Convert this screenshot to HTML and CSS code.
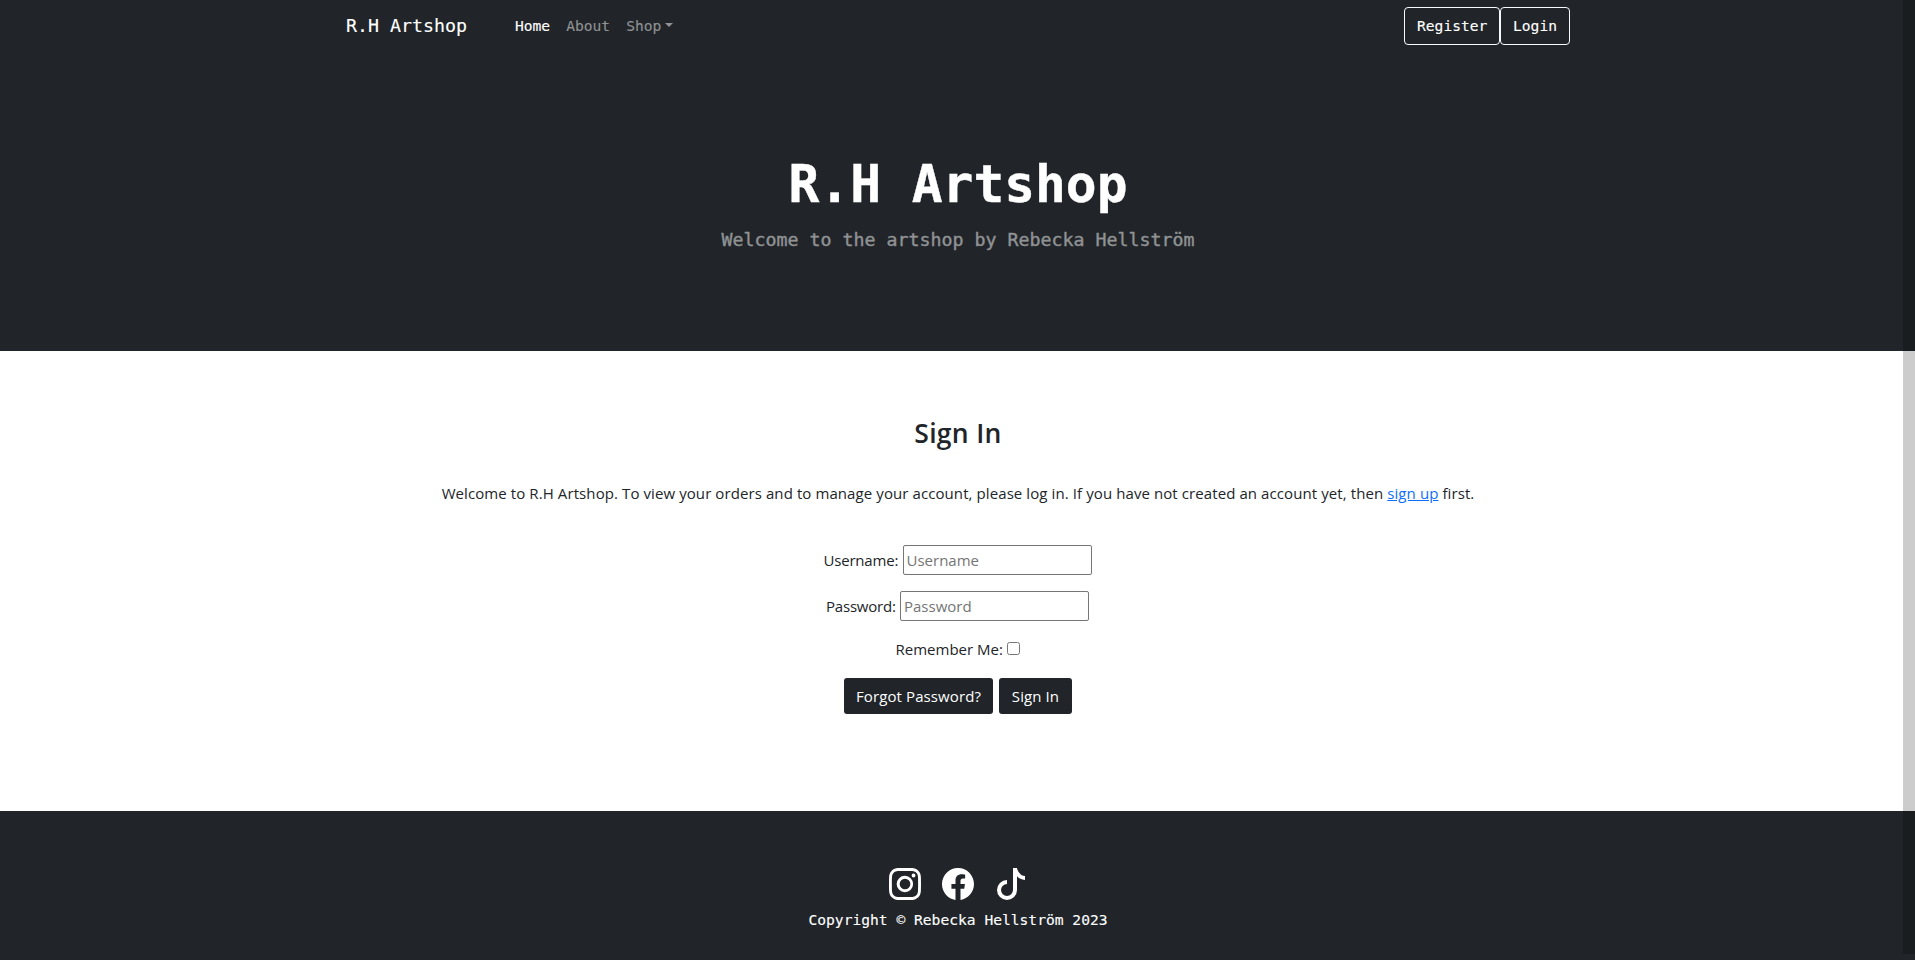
FILE: index.html
```html
<!DOCTYPE html>
<html lang="en">
<head>
<meta charset="utf-8">
<title>R.H Artshop</title>
<link rel="stylesheet" href="styles.css">
</head>
<body>
<nav class="navbar">
  <a class="brand">R.H Artshop</a>
  <div class="nav-links">
    <a class="nav-link active">Home</a>
    <a class="nav-link">About</a>
    <a class="nav-link dropdown">Shop</a>
  </div>
  <div class="nav-actions">
    <a class="btn-outline">Register</a>
    <a class="btn-outline">Login</a>
  </div>
</nav>
<header class="hero">
  <h1>R.H Artshop</h1>
  <p>Welcome to the artshop by Rebecka Hellström</p>
</header>
<main class="signin">
  <h2>Sign In</h2>
  <p class="intro">Welcome to R.H Artshop. To view your orders and to manage your account, please log in. If you have not created an account yet, then <a class="link">sign up</a> first.</p>
  <form class="form">
    <div class="field"><label class="label-user" for="user">Username:</label><input class="text-input" id="user" type="text" placeholder="Username"></div>
    <div class="field"><label class="label-pass" for="pass">Password:</label><input class="text-input" id="pass" type="password" placeholder="Password"></div>
    <div class="remember"><label class="label-remember" for="rem">Remember Me:</label><input class="check" id="rem" type="checkbox"></div>
    <div class="buttons"><a class="btn btn-forgot">Forgot Password?</a><button class="btn btn-signin" type="button">Sign In</button></div>
  </form>
</main>
<footer class="footer">
  <div class="social">
    <svg viewBox="0 0 16 16"><path d="M8 0C5.829 0 5.556.01 4.703.048 3.85.088 3.269.222 2.76.42a3.917 3.917 0 0 0-1.417.923A3.927 3.927 0 0 0 .42 2.76C.222 3.268.087 3.85.048 4.7.01 5.555 0 5.827 0 8.001c0 2.172.01 2.444.048 3.297.04.852.174 1.433.372 1.942.205.526.478.972.923 1.417.444.445.89.719 1.416.923.51.198 1.09.333 1.942.372C5.555 15.99 5.827 16 8 16s2.444-.01 3.298-.048c.851-.04 1.434-.174 1.943-.372a3.916 3.916 0 0 0 1.416-.923c.445-.445.718-.891.923-1.417.197-.509.332-1.09.372-1.942C15.99 10.445 16 10.173 16 8s-.01-2.445-.048-3.299c-.04-.851-.175-1.433-.372-1.941a3.926 3.926 0 0 0-.923-1.417A3.911 3.911 0 0 0 13.24.42c-.51-.198-1.092-.333-1.943-.372C10.443.01 10.172 0 7.998 0h.003zm-.717 1.442h.718c2.136 0 2.389.007 3.232.046.78.035 1.204.166 1.486.275.373.145.64.319.92.599.28.28.453.546.598.92.11.281.24.705.275 1.485.039.843.047 1.096.047 3.231s-.008 2.389-.047 3.232c-.035.78-.166 1.203-.275 1.485a2.47 2.47 0 0 1-.599.919c-.28.28-.546.453-.92.598-.28.11-.704.24-1.485.276-.843.038-1.096.047-3.232.047s-2.39-.009-3.233-.047c-.78-.036-1.203-.166-1.485-.276a2.478 2.478 0 0 1-.92-.598 2.48 2.48 0 0 1-.6-.92c-.109-.281-.24-.705-.275-1.485-.038-.843-.046-1.096-.046-3.233 0-2.136.008-2.388.046-3.231.036-.78.166-1.204.276-1.486.145-.373.319-.64.599-.92.28-.28.546-.453.92-.598.282-.11.705-.24 1.485-.276.738-.034 1.024-.044 2.515-.045v.002zm4.988 1.328a.96.96 0 1 0 0 1.92.96.96 0 0 0 0-1.92zm-4.27 1.122a4.109 4.109 0 1 0 0 8.217 4.109 4.109 0 0 0 0-8.217zm0 1.441a2.667 2.667 0 1 1 0 5.334 2.667 2.667 0 0 1 0-5.334z"/></svg>
    <svg viewBox="0 0 16 16"><path d="M16 8.049c0-4.446-3.582-8.05-8-8.05C3.58 0-.002 3.603-.002 8.05c0 4.017 2.926 7.347 6.75 7.951v-5.625h-2.03V8.05H6.75V6.275c0-2.017 1.195-3.131 3.022-3.131.876 0 1.791.157 1.791.157v1.98h-1.009c-.993 0-1.303.621-1.303 1.258v1.51h2.218l-.354 2.326H9.25V16c3.824-.604 6.75-3.934 6.75-7.951z"/></svg>
    <svg viewBox="0 0 16 16"><path d="M9 0h1.98c.144.715.54 1.617 1.235 2.512C12.895 3.389 13.797 4 15 4v2c-1.753 0-3.07-.814-4-1.829V11a5 5 0 1 1-5-5v2a3 3 0 1 0 3 3V0Z"/></svg>
  </div>
  <p>Copyright © Rebecka Hellström 2023</p>
</footer>
<div class="scroll-thumb"></div>
</body>
</html>
```
FILE: styles.css
```css
* { box-sizing: border-box; }
html { overflow: hidden; }
body {
  margin: 0;
  height: 960px;
  background: #fff;
  color: #212529;
  font: 15px/24px "Open Sans", sans-serif;
}
h1, h2, p { margin: 0; }
.navbar, .hero, .footer {
  background: #212529;
  color: #fff;
  font-family: "DejaVu Sans Mono", monospace;
  font-size: 14.62px;
  -webkit-text-stroke: .12px;
}
.navbar {
  display: flex;
  align-items: center;
  height: 52px;
  padding: 0 345px 0 346px;
}
.brand { font-size: 18.27px; margin-right: 40px; }
.nav-links { display: flex; flex: 1; }
.nav-link { padding: 0 8px; color: #909294; }
.nav-link.active { color: #fff; }
.dropdown::after {
  content: "";
  display: inline-block;
  margin-left: 4px;
  vertical-align: 4px;
  border-top: 4.5px solid;
  border-left: 4.5px solid transparent;
  border-right: 4.5px solid transparent;
}
.nav-actions { display: flex; }
.btn-outline {
  height: 38px;
  padding: 6px 12px;
  border: 1px solid #f8f9fa;
  border-radius: 4px;
}
.btn-outline:first-child { width: 96px; }
.hero {
  height: 299px;
  padding-top: 99px;
  text-align: center;
}
.hero h1 { font-size: 51.2px; line-height: 67px; font-weight: 700; padding-left: 1px; -webkit-text-stroke: .4px; }
.hero p {
  margin-top: 7px;
  padding-left: 1px;
  font-size: 18.27px;
  line-height: 30px;
  color: #909294;
  -webkit-text-stroke: .4px;
}
.signin {
  height: 460px;
  padding-top: 63px;
  text-align: center;
}
.signin h2 { padding-left: 1px; font-size: 26.5px; line-height: 38px; font-weight: 600; letter-spacing: .3px; }
.intro { margin-top: 29px; padding-left: 1px; letter-spacing: .09px; }
.link { color: #0d6efd; text-decoration: underline; }
.form { display: flex; flex-direction: column; align-items: center; margin-top: 40px; }
.field { display: flex; align-items: center; height: 30px; margin-bottom: 16px; }
.label-user, .label-pass { text-align: left; white-space: nowrap; letter-spacing: -.2px; }
.label-user { width: 79px; }
.label-pass { width: 74px; }
.text-input {
  width: 189px;
  height: 30px;
  padding: 1px 3px;
  border: 1px solid #767676;
  border-radius: 2px;
  font: inherit;
}
.text-input::placeholder { color: #757575; }
.remember { display: flex; align-items: center; height: 24px; }
.label-remember { width: 111px; text-align: left; white-space: nowrap; }
.check { width: 13px; height: 13px; margin: 0 0 2px; }
.buttons { display: flex; gap: 6px; margin-top: 17px; }
.btn {
  height: 36px;
  padding: 6px 0 6px 1px;
  border: 0;
  border-radius: 3px;
  background: #212529;
  color: #fff;
  font: inherit;
  letter-spacing: .1px;
}
.btn-forgot { width: 149px; }
.btn-signin { width: 73px; }
.footer { height: 149px; padding-top: 57px; text-align: center; }
.social { display: flex; justify-content: center; gap: 20.6px; height: 32px; padding-left: 1px; }
.social svg { width: 32px; height: 32px; fill: #fff; }
.footer p { margin-top: 8px; padding-left: 1px; }
.scroll-thumb {
  position: absolute;
  top: 0;
  right: 0;
  width: 12px;
  height: 954px;
  background: rgba(0, 0, 0, .2);
}
```
